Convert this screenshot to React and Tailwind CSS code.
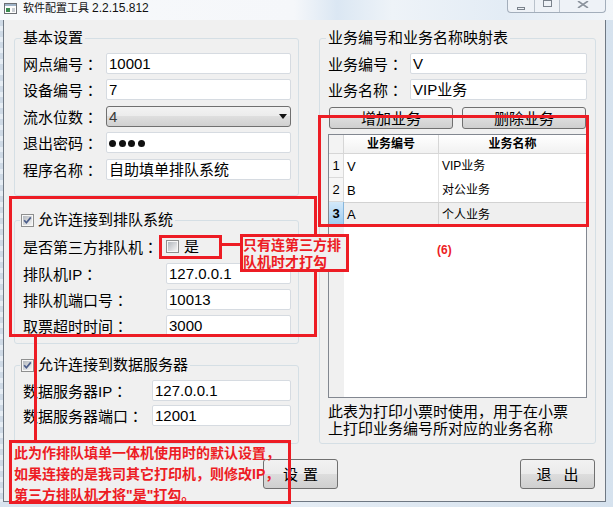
import React, { useId } from "react";

function CheckBox({ checked }) {
  const id = "cb" + useId().replace(/[^a-zA-Z0-9]/g, "");
  return (
    <svg width="13" height="13" viewBox="0 0 13 13" className="block shrink-0">
      <defs>
        <linearGradient id={id} x1="0" y1="0" x2="1" y2="1">
          <stop offset="0" stopColor="#b3b8be" />
          <stop offset="1" stopColor="#f5f5f5" />
        </linearGradient>
      </defs>
      <rect x="0.5" y="0.5" width="12" height="12" fill="#f7f7f7" stroke="#8e8f8f" />
      <rect x="2" y="2" width="9" height="9" fill={`url(#${id})`} />
      {checked && (
        <path d="M3.2 6.3 L5.4 8.8 L9.8 3.4" fill="none" stroke="#4b5d8a" strokeWidth="1.7" />
      )}
    </svg>
  );
}

function TextBox({ className = "", children }) {
  return (
    <div
      className={
        "h-[21px] shrink-0 flex items-center bg-white border border-[#d6dbe1] rounded-[2px] pl-[2px] text-[15px] leading-none text-black overflow-hidden " +
        className
      }
    >
      {children}
    </div>
  );
}

function Label({ children }) {
  return (
    <span className="text-[15px] leading-[21px] whitespace-nowrap">
      {children}
      <span className="font-['Noto_Sans_CJK_TC',sans-serif]">：</span>
    </span>
  );
}

function WinButton({ className = "", children }) {
  return (
    <div
      className={
        "flex items-center justify-center rounded-[3px] border border-[#707070] bg-[linear-gradient(#f2f2f2,#ebebeb_50%,#dddddd_50%,#cfcfcf)] text-[15px] leading-none whitespace-nowrap " +
        className
      }
    >
      {children}
    </div>
  );
}

export default function App() {
  return (
    <div className="relative w-[613px] h-[507px] overflow-hidden bg-[linear-gradient(90deg,#d9e3ee,#e4ecf4_50%,#d6e2ee)] font-['Liberation_Sans','Noto_Sans_CJK_SC',sans-serif] text-black">
      {/* title bar */}
      <div className="h-[20px] flex bg-[linear-gradient(90deg,#f7f9fb_0%,#f5f7fa_48%,#dbe7f3_55%,#eef3f8_64%,#e3ecf5_82%,#f1f5f9_100%)]">
        <div className="flex items-start pl-[4px] pt-[3px]">
          <svg width="13" height="11" viewBox="0 0 13 11" className="block">
            <rect x="0.5" y="0.5" width="12" height="10" fill="#fdfdfd" stroke="#6b6f74" />
            <rect x="1" y="1" width="11" height="2" fill="#9fb3c8" />
            <rect x="2" y="5" width="4" height="4" fill="#3a8a4f" />
            <rect x="8" y="5" width="3" height="4" fill="#c9ced4" />
          </svg>
          <span className="ml-[6px] -mt-[2px] text-[11px] leading-[14px] whitespace-nowrap text-[#111]">
            软件配置工具 <span className="text-[12px]">2.2.15.812</span>
          </span>
        </div>
        <div className="ml-auto mr-[7px] self-start flex h-[13px] rounded-b-[4px] border border-t-0 border-[#a3aebb] bg-[#eef2f7] overflow-hidden">
          <div className="w-[27px] border-r border-[#b9c2cc] flex items-end justify-center pb-[2px]">
            <div className="w-[8px] h-[3px] border border-[#7a828c]" />
          </div>
          <div className="w-[25px] border-r border-[#b9c2cc] flex justify-center items-start">
            <div className="w-[9px] h-[8px] -mt-[1px] border border-t-2 border-[#7a828c]" />
          </div>
          <div className="w-[45px] flex justify-center items-start pt-[1px]">
            <svg width="12" height="7" viewBox="0 0 12 7">
              <path d="M1 0 L11 7 M11 0 L1 7" stroke="#8a929c" strokeWidth="1.6" />
            </svg>
          </div>
        </div>
      </div>

      <div className="flex h-[487px]">
        <div className="w-[3px] h-[482px] bg-[repeating-linear-gradient(#cfdae6_0px,#cfdae6_6px,#e6edf4_6px,#e6edf4_11px)]" />
        <div className="w-[603px] h-[482px] border-x border-b border-[#6f7883] bg-[#f0f0f0] flex flex-col pl-[10px] pr-[9px] pt-[18px]">
          <div className="grid grid-cols-[285px_277px] gap-x-[20px]">
            {/* left column */}
            <div className="flex flex-col">
              {/* group 1 */}
              <div className="relative h-[158px] border border-[#d5dfe5] rounded-[3px] flex flex-col pl-[8px] pr-[7px]">
                <span className="absolute left-[6px] -top-[11px] px-[2px] bg-[#f0f0f0] text-[15px] leading-[20px]">基本设置</span>
                <div className="mt-[14px] flex items-center h-[21px]">
                  <Label>网点编号</Label>
                  <TextBox className="ml-auto w-[185px]">10001</TextBox>
                </div>
                <div className="mt-[5px] flex items-center h-[21px]">
                  <Label>设备编号</Label>
                  <TextBox className="ml-auto w-[185px]">7</TextBox>
                </div>
                <div className="mt-[6px] flex items-center h-[21px]">
                  <Label>流水位数</Label>
                  <div className="ml-auto w-[185px] h-[21px] flex items-center justify-between rounded-[3px] border border-[#707070] bg-[linear-gradient(#f3f3f3,#ebebeb_50%,#dedede_50%,#d0d0d0)] pl-[2px] pr-[3px] text-[15px] leading-none text-[#3a3a3a]">
                    <span>4</span>
                    <svg width="8" height="5" viewBox="0 0 8 5" className="block">
                      <path d="M0 0H8L4 5Z" fill="#111" />
                    </svg>
                  </div>
                </div>
                <div className="mt-[5px] flex items-center h-[21px]">
                  <Label>退出密码</Label>
                  <TextBox className="ml-auto w-[185px]">
                    <div className="flex gap-[2.5px] mt-[2px]">
                      <div className="w-[7px] h-[7px] rounded-full bg-[#111]" />
                      <div className="w-[7px] h-[7px] rounded-full bg-[#111]" />
                      <div className="w-[7px] h-[7px] rounded-full bg-[#111]" />
                      <div className="w-[7px] h-[7px] rounded-full bg-[#111]" />
                    </div>
                  </TextBox>
                </div>
                <div className="mt-[6px] flex items-center h-[21px]">
                  <Label>程序名称</Label>
                  <TextBox className="ml-auto w-[185px]">自助填单排队系统</TextBox>
                </div>
              </div>

              {/* group 2 */}
              <div className="relative mt-[24px] h-[124px] border border-[#d5dfe5] rounded-[3px] flex flex-col pl-[8px] pr-[7px]">
                <span className="absolute left-[5px] -top-[11px] pl-[1px] pr-[2px] bg-[#f0f0f0] flex items-center gap-[4px] text-[15px] leading-[20px]">
                  <CheckBox checked />
                  允许连接到排队系统
                </span>
                <div className="mt-[15px] flex items-center h-[21px]">
                  <Label>是否第三方排队机</Label>
                  <div className="ml-auto w-[125px] flex items-center gap-[5px]">
                    <CheckBox />
                    <span className="text-[15px] leading-[21px]">是</span>
                  </div>
                </div>
                <div className="mt-[6px] flex items-center h-[21px]">
                  <Label>排队机IP</Label>
                  <TextBox className="ml-auto w-[125px]">127.0.0.1</TextBox>
                </div>
                <div className="mt-[5px] flex items-center h-[21px]">
                  <Label>排队机端口号</Label>
                  <TextBox className="ml-auto w-[125px]">10013</TextBox>
                </div>
                <div className="mt-[5px] flex items-center h-[21px]">
                  <Label>取票超时时间</Label>
                  <TextBox className="ml-auto w-[125px]">3000</TextBox>
                </div>
              </div>

              {/* group 3 */}
              <div className="relative mt-[21px] h-[79px] border border-[#d5dfe5] rounded-[3px] flex flex-col pl-[8px] pr-[7px]">
                <span className="absolute left-[5px] -top-[11px] pl-[1px] pr-[2px] bg-[#f0f0f0] flex items-center gap-[4px] text-[15px] leading-[20px]">
                  <CheckBox checked />
                  允许连接到数据服务器
                </span>
                <div className="mt-[14px] flex items-center h-[21px]">
                  <Label>数据服务器IP</Label>
                  <TextBox className="ml-auto w-[139px]">127.0.0.1</TextBox>
                </div>
                <div className="mt-[4px] flex items-center h-[21px]">
                  <Label>数据服务器端口</Label>
                  <TextBox className="ml-auto w-[139px]">12001</TextBox>
                </div>
              </div>
            </div>

            {/* right group */}
            <div className="relative h-[406px] border border-[#d5dfe5] rounded-[3px] flex flex-col pl-[8px] pr-[8px]">
              <span className="absolute left-[6px] -top-[11px] px-[2px] bg-[#f0f0f0] text-[15px] leading-[20px] whitespace-nowrap">业务编号和业务名称映射表</span>
              <div className="mt-[14px] flex items-center h-[21px]">
                <Label>业务编号</Label>
                <TextBox className="ml-auto w-[177px]">V</TextBox>
              </div>
              <div className="mt-[5px] flex items-center h-[21px]">
                <Label>业务名称</Label>
                <TextBox className="ml-auto w-[177px]">VIP业务</TextBox>
              </div>
              <div className="mt-[7px] grid grid-cols-2 gap-x-[9px] px-[1px]">
                <WinButton className="h-[22px]">增加业务</WinButton>
                <WinButton className="h-[22px]">删除业务</WinButton>
              </div>

              {/* table */}
              <div className="mt-[5px] h-[264px] border border-[#828790] bg-white flex flex-col text-[12px] leading-none">
                <div className="flex h-[19px] shrink-0">
                  <div className="w-[15px] bg-[#f3f3f3] border-r border-b border-[#d6d6d6]" />
                  <div className="w-[95px] flex items-center justify-center font-bold border-r border-b border-[#d6d6d6] bg-[linear-gradient(#ffffff,#f1f1f1)]">业务编号</div>
                  <div className="flex-1 flex items-center justify-center font-bold border-b border-[#d6d6d6] bg-[linear-gradient(#ffffff,#f1f1f1)]">业务名称</div>
                </div>
                <div className="flex h-[24px] shrink-0">
                  <div className="w-[15px] flex items-center justify-center bg-[#f6f6f6] border-r border-b border-[#dadada] text-[13px]">1</div>
                  <div className="w-[95px] flex items-center pl-[3px] border-r border-[#e2e2e2] text-[13px]">V</div>
                  <div className="flex-1 flex items-center pl-[3px]">VIP业务</div>
                </div>
                <div className="flex h-[24px] shrink-0">
                  <div className="w-[15px] flex items-center justify-center bg-[#f6f6f6] border-r border-b border-[#dadada] text-[13px]">2</div>
                  <div className="w-[95px] flex items-center pl-[3px] border-r border-[#e2e2e2] text-[13px]">B</div>
                  <div className="flex-1 flex items-center pl-[3px]">对公业务</div>
                </div>
                <div className="flex h-[24px] shrink-0">
                  <div className="w-[15px] flex items-center justify-center bg-[linear-gradient(#d3e9fa,#9ccbf0)] border-r border-b border-[#86b6dc] text-[13px] font-bold">3</div>
                  <div className="w-[95px] flex items-center pl-[3px] border-r border-t border-[#d2d2d2] bg-[#efefef] text-[13px]">A</div>
                  <div className="flex-1 flex items-center pl-[3px] border-t border-[#d2d2d2] bg-[#efefef]">个人业务</div>
                </div>
                <div className="flex flex-1">
                  <div className="w-[15px] bg-[#f0f0f0]" />
                  <div className="flex-1 bg-white" />
                </div>
              </div>

              <div className="mt-[5px] text-[15px] leading-[17px] whitespace-nowrap">
                <div>此表为打印小票时使用，用于在小票</div>
                <div>上打印业务编号所对应的业务名称</div>
              </div>
            </div>
          </div>

          {/* bottom buttons */}
          <div className="mt-[15px] flex">
            <WinButton className="ml-[249px] w-[75px] h-[30px] gap-[5px]">
              <span>设</span>
              <span>置</span>
            </WinButton>
            <WinButton className="ml-auto mr-[1px] w-[75px] h-[30px] gap-[12px]">
              <span>退</span>
              <span>出</span>
            </WinButton>
          </div>
        </div>
        <div className="w-[7px] h-[482px]" />
      </div>

      {/* red annotations */}
      <div className="absolute left-[9px] top-[196px] w-[308px] h-[141px] border-[3px] border-[#ed1c24]" />
      <div className="absolute left-[34px] top-[337px] w-[3px] h-[104px] bg-[#ed1c24]" />
      <div className="absolute left-[9px] top-[440px] w-[282px] h-[64px] border-[3px] border-[#ed1c24] pl-[2px] text-[14px] font-bold leading-[21px] text-[#ed1c24] whitespace-nowrap">
        <div>此为作排队填单一体机使用时的默认设置，</div>
        <div>如果连接的是我司其它打印机，则修改IP，</div>
        <div>第三方排队机才将"是"打勾。</div>
      </div>
      <div className="absolute left-[159px] top-[235px] w-[63px] h-[24px] border-[3px] border-[#ed1c24]" />
      <div className="absolute left-[221px] top-[243px] w-[20px] h-[3px] bg-[#ed1c24]" />
      <div className="absolute left-[240px] top-[234px] w-[109px] h-[38px] border-[3px] border-[#ed1c24] bg-[#f0f0f0] text-[14px] font-bold leading-[17px] text-[#ed1c24] whitespace-nowrap">
        只有连第三方排
        <br />
        队机时才打勾
      </div>
      <div className="absolute left-[318px] top-[115px] w-[271px] h-[112px] border-[3px] border-[#ed1c24]" />
      <div className="absolute left-[437px] top-[243px] text-[12px] font-bold leading-[14px] text-[#ed1c24]">(6)</div>
    </div>
  );
}
